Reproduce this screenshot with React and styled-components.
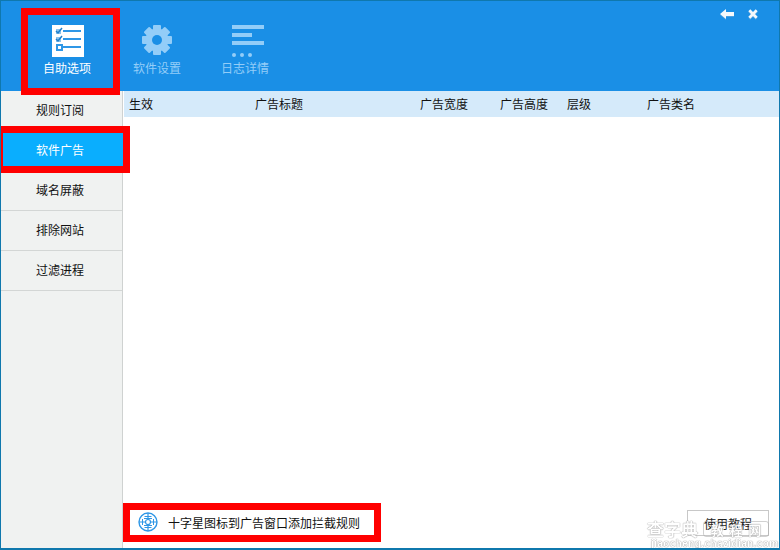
import React from "react";
import styled, { createGlobalStyle } from "styled-components";

const Global = createGlobalStyle`
  html, body { margin: 0; padding: 0; background: #fff; }
  body { font-family: "Noto Sans CJK SC", "Liberation Sans", sans-serif; }
`;

const Window = styled.div`
  position: relative;
  width: 780px;
  height: 550px;
  box-sizing: border-box;
  border: 1px solid #0f78ad;
  border-bottom-width: 2px;
  display: flex;
  flex-direction: column;
  overflow: hidden;
  background: #fff;
`;

const Header = styled.header`
  height: 90px;
  flex: none;
  background: #1a8fe6;
  display: flex;
  padding-left: 21px;
  position: relative;
`;

const Tab = styled.div`
  width: ${(p) => p.$w}px;
  display: flex;
  flex-direction: column;
  align-items: center;
  color: ${(p) => (p.$active ? "#ffffff" : "#93cdf8")};
  font-size: 12px;
  line-height: 16px;
  padding-top: 24px;
  box-sizing: border-box;
`;

const TabIcon = styled.div`
  height: 32px;
  display: flex;
  align-items: flex-start;
  justify-content: center;
  margin-bottom: 3px;
  margin-left: ${(p) => p.$nudge || 0}px;
`;

const WinButtons = styled.div`
  position: absolute;
  top: 8px;
  right: 21px;
  display: flex;
  gap: 14px;
  align-items: center;
  filter: drop-shadow(0 1px 0 #4a9fe0);
`;

const Body = styled.div`
  flex: 1;
  display: flex;
  min-height: 0;
`;

const Sidebar = styled.nav`
  width: 122px;
  flex: none;
  box-sizing: border-box;
  background: #f0f2f1;
  border-right: 1px solid #cfd2d1;
`;

const SideItem = styled.div`
  height: 40px;
  box-sizing: border-box;
  display: flex;
  align-items: center;
  padding: 0 0 2px 35px;
  margin-right: ${(p) => (p.$active ? "-1px" : "0")};
  font-size: 12px;
  color: ${(p) => (p.$active ? "#fff" : "#111")};
  background: ${(p) => (p.$active ? "#0aaefe" : "transparent")};
  border-bottom: 1px solid ${(p) => (p.$active ? "#0aaefe" : "#d3d6d5")};
`;

const Main = styled.main`
  flex: 1;
  display: flex;
  flex-direction: column;
  padding-left: 1px;
  min-width: 0;
`;

const TableHead = styled.div`
  height: 26px;
  flex: none;
  box-sizing: border-box;
  background: #d5eafa;
  display: grid;
  grid-template-columns: 126px 165px 80px 67px 80px 1fr;
  align-items: center;
  padding: 0 0 2px 5px;
  font-size: 12px;
  color: #111;
`;

const TableBody = styled.div`
  flex: 1;
`;

const Footer = styled.div`
  height: 45px;
  flex: none;
  display: flex;
  align-items: flex-start;
  padding: 0 10px 0 14px;
  font-size: 12px;
  color: #111;
`;

const Hint = styled.div`
  display: flex;
  align-items: center;
  gap: 10px;
  height: 24px;
  margin-top: 7px;
`;

const HelpButton = styled.div`
  margin-left: auto;
  width: 82px;
  height: 26px;
  margin-top: 7px;
  box-sizing: border-box;
  border: 1px solid #c8c8c8;
  display: flex;
  align-items: center;
  justify-content: center;
  font-size: 12px;
  color: #222;
`;

const RedBox = styled.div`
  position: absolute;
  box-sizing: border-box;
  border: 7px solid #ff0000;
  left: ${(p) => p.$x}px;
  top: ${(p) => p.$y}px;
  width: ${(p) => p.$w}px;
  height: ${(p) => p.$h}px;
`;

const Watermark = styled.div`
  position: absolute;
  left: 646px;
  top: 518px;
  width: 122px;
  color: #fff;
  text-shadow: 0 0 1px #8a8a8a, 0 0 1px #8a8a8a;
  opacity: 0.9;
  filter: blur(0.4px);
  font-weight: 700;
`;

const WatermarkTitle = styled.div`
  display: flex;
  justify-content: space-between;
  align-items: center;
  height: 20px;
  white-space: nowrap;
`;

const WatermarkBrand = styled.span`
  font-size: 17px;
  line-height: 20px;
`;

const WatermarkTag = styled.span`
  box-sizing: border-box;
  width: 66px;
  height: 16px;
  display: flex;
  align-items: center;
  justify-content: space-around;
  padding: 0 4px;
  border: 1px solid rgba(170, 170, 170, 0.6);
  border-radius: 3px;
  font-size: 13px;
`;

const WatermarkSub = styled.div`
  font-family: "Liberation Sans", sans-serif;
  font-size: 10px;
  line-height: 9px;
  letter-spacing: 0.4px;
  padding-left: 4px;
  white-space: nowrap;
`;

const ListIcon = () => (
  <svg width="32" height="32" viewBox="0 0 32 32" shapeRendering="crispEdges">
    <rect width="32" height="32" fill="#fff" />
    <path d="M11 6h18M11 14h18M11 22h18" stroke="#2f97e6" strokeWidth="2" />
    <rect x="5" y="20" width="5" height="5" fill="none" stroke="#2f97e6" strokeWidth="1.500" />
    <rect x="4" y="4" width="5" height="5" fill="#8cc4ee" />
    <rect x="4" y="12" width="5" height="5" fill="#8cc4ee" />
    <path d="M4 6l2 2 4-5M4 14l2 2 4-5" fill="none" stroke="#1f7fcb" strokeWidth="1.500" shapeRendering="auto" />
  </svg>
);

const GearIcon = () => (
  <svg width="30" height="30" viewBox="0 0 30 30">
    <g fill="#93cdf8">
      {[0, 45, 90, 135].map((a) => (
        <rect key={a} x="11" y="0" width="8" height="30" rx="1" transform={`rotate(${a} 15 15)`} />
      ))}
      <circle cx="15" cy="15" r="11.500" />
    </g>
    <circle cx="15" cy="15" r="5" fill="#1a8fe6" />
  </svg>
);

const LogIcon = () => (
  <svg width="32" height="32" viewBox="0 0 32 32">
    <g fill="#93cdf8">
      <rect x="0" y="0" width="32" height="4" />
      <rect x="0" y="8" width="20" height="4" />
      <rect x="0" y="16" width="32" height="4" />
      <circle cx="2" cy="30" r="2" />
      <circle cx="10" cy="30" r="2" />
      <circle cx="18" cy="30" r="2" />
    </g>
  </svg>
);

const BackIcon = () => (
  <svg width="14" height="10" viewBox="0 0 14 10">
    <path d="M0 5L6 0v3h8v4H6v3z" fill="#f5f8fb" />
  </svg>
);

const CloseIcon = () => (
  <svg width="10" height="10" viewBox="0 0 10 10">
    <path d="M1.300 1.300l7.400 7.400M8.700 1.300L1.300 8.700" stroke="#f5f8fb" strokeWidth="2.800" />
  </svg>
);

const CrossIcon = () => (
  <svg width="20" height="20" viewBox="0 0 20 20" fill="none" stroke="#2f97e6">
    <circle cx="10" cy="10" r="9" strokeWidth="1.400" />
    <circle cx="10" cy="10" r="2.500" strokeWidth="1.200" />
    <path d="M10 1v6.500M10 12.500V19M1 10h6.500M12.500 10H19" strokeWidth="1.200" />
    <path d="M6.500 4.500h7M6 6.500h8M6 13.500h8M6.500 15.500h7M4.500 7v6M15.500 7v6" strokeWidth="1" />
  </svg>
);

const tabs = [
  { label: "自助选项", Icon: ListIcon, active: true, w: 90, nudge: 2 },
  { label: "软件设置", Icon: GearIcon, w: 90, nudge: 0 },
  { label: "日志详情", Icon: LogIcon, w: 86, nudge: 6 },
];

const sideItems = ["规则订阅", "软件广告", "域名屏蔽", "排除网站", "过滤进程"];
const columns = ["生效", "广告标题", "广告宽度", "广告高度", "层级", "广告类名"];

export default function App() {
  return (
    <Window>
      <Global />
      <Header>
        {tabs.map(({ label, Icon, active, w, nudge }) => (
          <Tab key={label} $active={active} $w={w}>
            <TabIcon $nudge={nudge}>
              <Icon />
            </TabIcon>
            {label}
          </Tab>
        ))}
        <WinButtons>
          <BackIcon />
          <CloseIcon />
        </WinButtons>
      </Header>
      <Body>
        <Sidebar>
          {sideItems.map((s) => (
            <SideItem key={s} $active={s === "软件广告"}>
              {s}
            </SideItem>
          ))}
        </Sidebar>
        <Main>
          <TableHead>
            {columns.map((c) => (
              <span key={c}>{c}</span>
            ))}
          </TableHead>
          <TableBody />
          <Footer>
            <Hint>
              <CrossIcon />
              十字星图标到广告窗口添加拦截规则
            </Hint>
            <HelpButton>使用教程</HelpButton>
          </Footer>
        </Main>
      </Body>
      <RedBox $x={20} $y={7} $w={99} $h={87} />
      <RedBox $x={-5} $y={125} $w={134} $h={47} />
      <RedBox $x={122} $y={502} $w={258} $h={39} />
      <Watermark>
        <WatermarkTitle>
          <WatermarkBrand>查字典</WatermarkBrand>
          <WatermarkTag>
            <span>教</span>
            <span>程</span>
            <span>网</span>
          </WatermarkTag>
        </WatermarkTitle>
        <WatermarkSub>jiaocheng.chazidian.com</WatermarkSub>
      </Watermark>
    </Window>
  );
}
